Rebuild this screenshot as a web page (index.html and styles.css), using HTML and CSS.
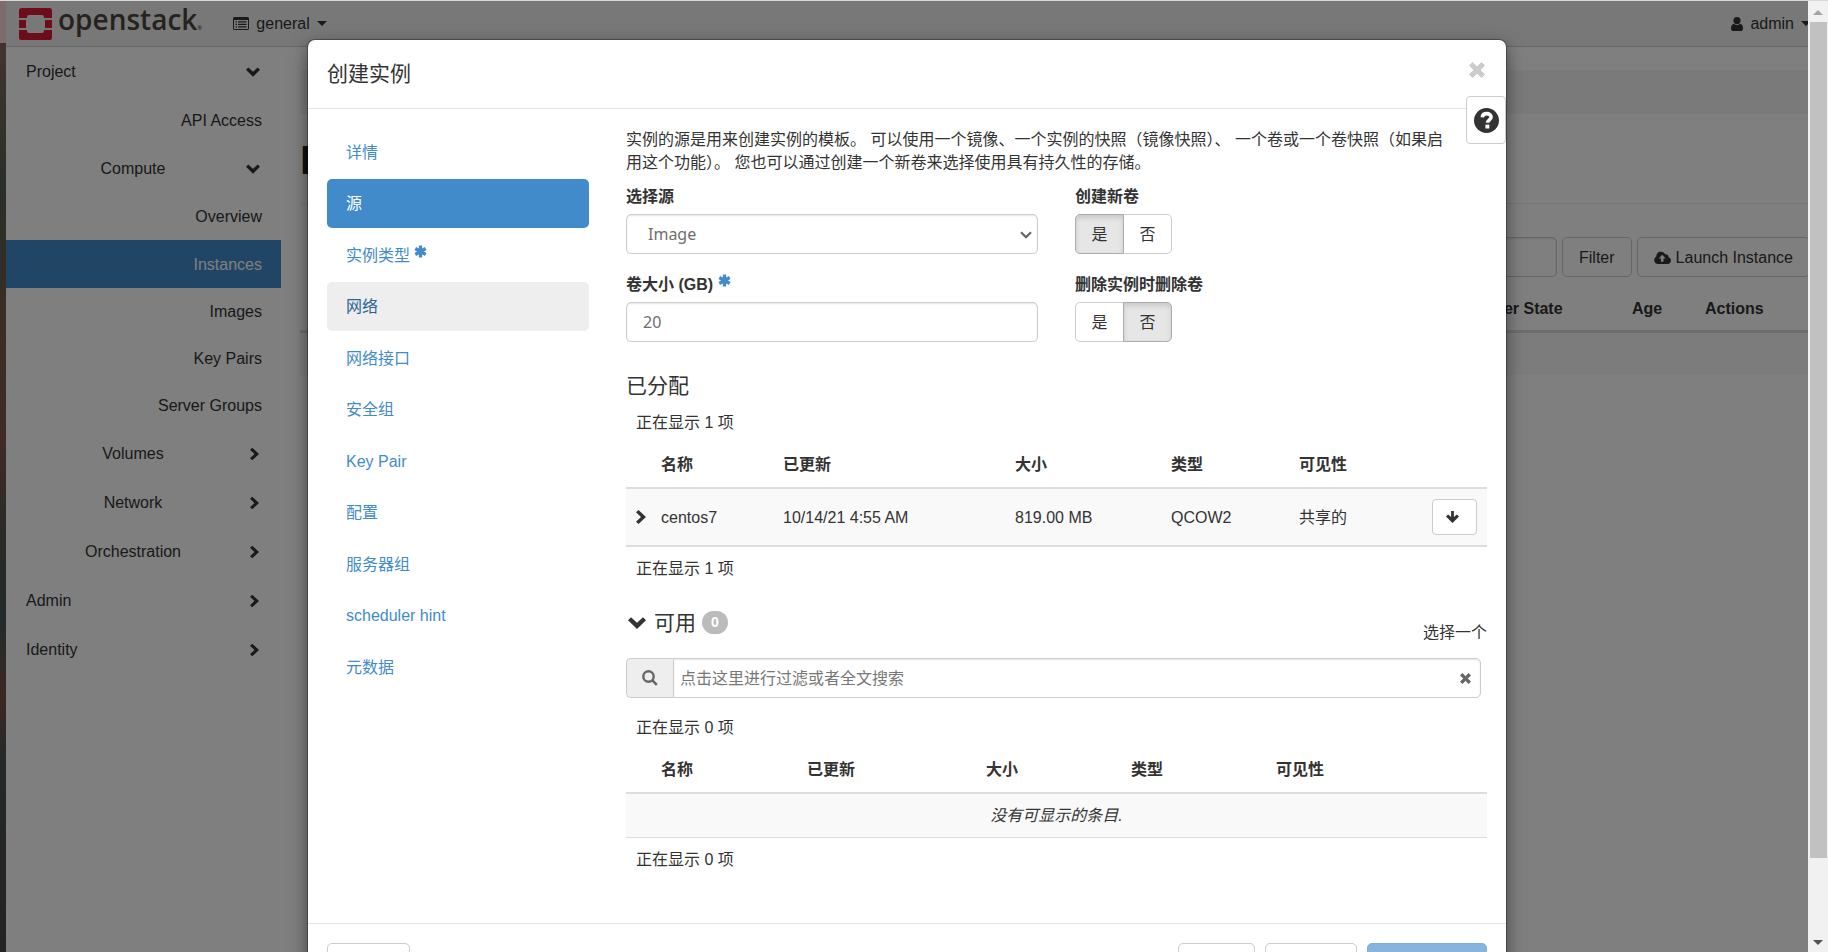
FILE: index.html
```html
<!DOCTYPE html>
<html lang="zh-CN">
<head>
    <meta charset="UTF-8">
    <meta name="viewport" content="width=device-width, initial-scale=1.0">
    <title>Instances - OpenStack Dashboard</title>
    <link rel="stylesheet" href="styles.css">
</head>
<body>
    <!-- shared icons -->
    <svg class="sprite" aria-hidden="true">
        <symbol id="chevron-down" viewBox="0 0 18 12"><path d="M0 3.2 3 .2l6 5.6 6-5.6 3 3L9 12z"/></symbol>
        <symbol id="chevron-right" viewBox="0 0 10 14"><path d="M2.500 0 10 7l-7.500 7L0 11.700 5 7 0 2.300z"/></symbol>
        <symbol id="times" viewBox="0 0 16 16"><path d="M3.500.5 8 5 12.500.5l3 3L11 8l4.500 4.500-3 3L8 11l-4.500 4.500-3-3L5 8 .5 3.500z" stroke="currentColor" stroke-linejoin="round"/></symbol>
        <symbol id="asterisk" viewBox="0 0 14 14"><path d="M7 .5v13M1.400 3.800l11.200 6.400M1.400 10.200l11.200-6.400" stroke="currentColor" stroke-width="3.600"/></symbol>
    </svg>

    <div class="desktop-edge"></div>

    <div class="page">
        <nav class="navbar">
            <a class="brand" href="#">
                <svg class="brand-mark" viewBox="0 0 33 32">
                    <path fill="#da1a32" d="M2.500 0h28A2.500 2.500 0 0 1 33 2.500V10h-8V9a2 2 0 0 0-2-2H10a2 2 0 0 0-2 2v1H0V2.500A2.500 2.500 0 0 1 2.500 0zM0 12h7v8H0zM26 12h7v8h-7zM0 22h8v1a2 2 0 0 0 2 2h13a2 2 0 0 0 2-2v-1h8v7.500a2.500 2.500 0 0 1-2.500 2.500h-28A2.500 2.500 0 0 1 0 29.500z"/>
                </svg>
                <span class="brand-name">openstack<span class="brand-dot">®</span></span>
            </a>
            <a class="nav-link" href="#">
                <svg class="icon-list" viewBox="0 0 16 13"><path fill-rule="evenodd" d="M1.500 0h13A1.500 1.500 0 0 1 16 1.500v10a1.500 1.500 0 0 1-1.500 1.500h-13A1.500 1.500 0 0 1 0 11.500v-10A1.500 1.500 0 0 1 1.500 0zM1 3v8.500l.5.5h13l.5-.5V3zM2.500 4.200H4v1.300H2.500zM5 4.200h8.500v1.300H5zM2.500 6.700H4V8H2.500zM5 6.700h8.500V8H5zM2.500 9.200H4v1.300H2.500zM5 9.200h8.500v1.300H5z"/></svg>
                general
                <span class="caret"></span>
            </a>
            <a class="nav-link nav-user" href="#">
                <svg class="icon-user" viewBox="0 0 12 14"><path d="M6 0a3.500 3.500 0 1 1 0 7.200A3.500 3.500 0 0 1 6 0zM3 6.800a4.500 4.500 0 0 0 6 0c2 .2 3 2 3 4.600 0 1.600-.9 2.600-2.200 2.600H2.200C.9 14 0 13 0 11.400 0 8.800 1 7 3 6.800z"/></svg>
                admin
                <span class="caret"></span>
            </a>
        </nav>

        <div class="main">
            <aside class="sidebar">
                <a class="side-head" href="#"><span>Project</span><svg class="down"><use href="#chevron-down"/></svg></a>
                <a class="side-item tall" href="#">API Access</a>
                <a class="side-head sub" href="#"><span>Compute</span><svg class="down"><use href="#chevron-down"/></svg></a>
                <a class="side-item" href="#">Overview</a>
                <a class="side-item tall active" href="#">Instances</a>
                <a class="side-item" href="#">Images</a>
                <a class="side-item" href="#">Key Pairs</a>
                <a class="side-item" href="#">Server Groups</a>
                <a class="side-head sub" href="#"><span>Volumes</span><svg class="right"><use href="#chevron-right"/></svg></a>
                <a class="side-head sub" href="#"><span>Network</span><svg class="right"><use href="#chevron-right"/></svg></a>
                <a class="side-head sub" href="#"><span>Orchestration</span><svg class="right"><use href="#chevron-right"/></svg></a>
                <a class="side-head" href="#"><span>Admin</span><svg class="right"><use href="#chevron-right"/></svg></a>
                <a class="side-head" href="#"><span>Identity</span><svg class="right"><use href="#chevron-right"/></svg></a>
            </aside>

            <main class="content">
                <div class="breadcrumb"></div>
                <h1>Instances</h1>
                <div class="toolbar">
                    <input class="form-control" type="text" aria-label="Filter instances">
                    <button class="btn" type="button">Filter</button>
                    <button class="btn btn-launch" type="button">
                        <svg class="icon-cloud" viewBox="0 0 17 13"><path fill-rule="evenodd" d="M4 13a4 4 0 0 1-1.700-7.500A4.800 4.800 0 0 1 11.300 3.200 2.800 2.800 0 0 1 14.500 6 3.600 3.600 0 0 1 13.500 13zM8.200 3.800 4.800 7.400H7v3.400h2.500V7.400h2.200z"/></svg>
                        Launch Instance
                    </button>
                </div>
                <table class="instances">
                    <thead>
                        <tr><th></th><th class="col-power">Power State</th><th class="col-age">Age</th><th class="col-actions">Actions</th></tr>
                    </thead>
                    <tbody>
                        <tr><td colspan="4"></td></tr>
                    </tbody>
                </table>
            </main>
        </div>
    </div>

    <div class="backdrop">
        <div class="modal" role="dialog" aria-labelledby="modal-title">
            <header class="modal-header">
                <h4 id="modal-title">创建实例</h4>
                <button class="close" type="button" aria-label="关闭"><svg><use href="#times"/></svg></button>
            </header>
            <button class="help" type="button" aria-label="帮助">
                <svg viewBox="0 0 25 25"><circle cx="12.500" cy="12.500" r="12.500" fill="#333"/><path d="M8.300 9.300C8.500 6.900 10.200 5.600 12.700 5.600c2.600 0 4.400 1.400 4.400 3.500 0 3-3.600 3-3.600 5.600" fill="none" stroke="#fff" stroke-width="3.600"/><path fill="#fff" d="M11.400 16.600h3.900v3.900h-3.900z"/></svg>
            </button>

            <div class="modal-body">
                <ul class="steps">
                    <li><a href="#">详情</a></li>
                    <li><a class="active" href="#">源</a></li>
                    <li><a href="#">实例类型 <svg class="required"><use href="#asterisk"/></svg></a></li>
                    <li><a class="hover" href="#">网络</a></li>
                    <li><a href="#">网络接口</a></li>
                    <li><a href="#">安全组</a></li>
                    <li><a href="#">Key Pair</a></li>
                    <li><a href="#">配置</a></li>
                    <li><a href="#">服务器组</a></li>
                    <li><a href="#">scheduler hint</a></li>
                    <li><a href="#">元数据</a></li>
                </ul>

                <section class="step">
                    <p class="intro">实例的源是用来创建实例的模板。 可以使用一个镜像、一个实例的快照（镜像快照）、 一个卷或一个卷快照（如果启用这个功能）。 您也可以通过创建一个新卷来选择使用具有持久性的存储。</p>

                    <div class="form-grid">
                        <div class="form-group">
                            <label for="boot-source">选择源</label>
                            <div class="select-wrap">
                                <select class="form-control" id="boot-source"><option>Image</option></select>
                                <svg viewBox="0 0 12 8"><path d="M1 1.300l5 5 5-5" fill="none" stroke="#666" stroke-width="2.200"/></svg>
                            </div>
                        </div>
                        <div class="form-group">
                            <span class="label" id="new-volume">创建新卷</span>
                            <div class="btn-group" role="group" aria-labelledby="new-volume">
                                <button class="btn pressed" type="button">是</button>
                                <button class="btn" type="button">否</button>
                            </div>
                        </div>
                        <div class="form-group">
                            <label for="volume-size">卷大小 (GB) <svg class="required"><use href="#asterisk"/></svg></label>
                            <input class="form-control" id="volume-size" type="text" value="20">
                        </div>
                        <div class="form-group">
                            <span class="label" id="delete-volume">删除实例时删除卷</span>
                            <div class="btn-group" role="group" aria-labelledby="delete-volume">
                                <button class="btn" type="button">是</button>
                                <button class="btn pressed" type="button">否</button>
                            </div>
                        </div>
                    </div>

                    <h4 class="allocated-title">已分配</h4>
                    <div class="count count-top">正在显示 1 项</div>
                    <table class="transfer allocated">
                        <colgroup><col class="c-expand"><col class="c-name"><col class="c-updated"><col class="c-size"><col class="c-type"><col><col class="c-action"></colgroup>
                        <thead>
                            <tr><th></th><th>名称</th><th>已更新</th><th>大小</th><th>类型</th><th>可见性</th><th></th></tr>
                        </thead>
                        <tbody>
                            <tr>
                                <td class="expand"><svg><use href="#chevron-right"/></svg></td>
                                <td>centos7</td>
                                <td>10/14/21 4:55 AM</td>
                                <td>819.00 MB</td>
                                <td>QCOW2</td>
                                <td>共享的</td>
                                <td>
                                    <button class="btn btn-move" type="button" aria-label="移除">
                                        <svg viewBox="0 0 14 13"><path d="M5.500 0h3v6.600L11.700 3.800 14 6 7 13 0 6l2.300-2.200 3.200 2.800z"/></svg>
                                    </button>
                                </td>
                            </tr>
                        </tbody>
                    </table>
                    <div class="count">正在显示 1 项</div>

                    <div class="available-head">
                        <h4><svg><use href="#chevron-down"/></svg>可用<span class="badge">0</span></h4>
                        <span>选择一个</span>
                    </div>
                    <div class="search">
                        <span class="addon"><svg viewBox="0 0 16 16"><circle cx="6.500" cy="6.500" r="5.200" fill="none" stroke="#666" stroke-width="2.400"/><path d="M10.400 10.400l4.400 4.400" stroke="#666" stroke-width="2.600"/></svg></span>
                        <input class="form-control" type="text" aria-label="过滤" placeholder="点击这里进行过滤或者全文搜索">
                        <button class="clear" type="button" aria-label="清除"><svg><use href="#times"/></svg></button>
                    </div>
                    <div class="count count-top">正在显示 0 项</div>
                    <table class="transfer available">
                        <colgroup><col class="c-expand"><col class="c-name"><col class="c-updated"><col class="c-size"><col class="c-type"><col></colgroup>
                        <thead>
                            <tr><th></th><th>名称</th><th>已更新</th><th>大小</th><th>类型</th><th>可见性</th></tr>
                        </thead>
                        <tbody>
                            <tr><td class="empty" colspan="6">没有可显示的条目.</td></tr>
                        </tbody>
                    </table>
                    <div class="count">正在显示 0 项</div>
                </section>
            </div>

            <footer class="modal-footer">
                <button class="btn btn-cancel" type="button" aria-label="取消"></button>
                <button class="btn btn-back" type="button" aria-label="返回"></button>
                <button class="btn btn-next" type="button" aria-label="下一项"></button>
                <button class="btn btn-primary" type="button" aria-label="创建实例" disabled></button>
            </footer>
        </div>
    </div>

    <div class="scrollbar">
        <span class="arrow-up"></span>
        <div class="track"><div class="thumb"></div></div>
        <span class="arrow-down"></span>
    </div>
</body>
</html>
```

FILE: styles.css
```css
* {
    box-sizing: border-box;
}
body {
    margin: 0;
    height: 100vh;
    overflow: hidden;
    display: flex;
    position: relative;
    border-top: 1px solid #d9d9d9;
    font-family: "Liberation Sans", Arial, "Noto Sans CJK SC", sans-serif;
    font-size: 16px;
    line-height: 23px;
    color: #333;
    background: #fff;
}
a {
    color: inherit;
    text-decoration: none;
}
h1, h4, p, ul {
    margin: 0;
    padding: 0;
    font-weight: normal;
}
h4 {
    font-size: 21px;
    line-height: 23px;
}
svg {
    fill: currentColor;
    flex: none;
}
button, input, select {
    font-family: inherit;
    font-size: 16px;
    line-height: 23px;
    color: #333;
    margin: 0;
}
table {
    width: 100%;
    border-collapse: collapse;
    table-layout: fixed;
}
th {
    text-align: left;
}
.sprite {
    position: absolute;
    width: 0;
    height: 0;
}
.desktop-edge {
    width: 6px;
    background: linear-gradient(#7d6c6c 42px, #40352e 42px, #2a2f27 20%, #382e24 33%, #402a25 46%, #2a2b26 56%, #222b2c 65%, #3b2820 73%, #25292a 80%, #232322);
}

/* controls */
.btn {
    height: 40px;
    padding: 0 16px;
    border: 1px solid #ccc;
    border-radius: 5px;
    background: #fff;
}
.form-control {
    width: 100%;
    height: 40px;
    padding: 0 16px;
    border: 1px solid #ccc;
    border-radius: 5px;
    background: #fff;
    box-shadow: inset 0 1px 2px rgba(0, 0, 0, 0.1);
    color: #6e6e6e;
    font-family: "Noto Sans", "Noto Sans CJK SC", sans-serif;
}
.caret {
    border: 5px solid transparent;
    border-top-color: currentColor;
    border-bottom: 0;
}

/* page behind the dialog */
.page {
    flex: 1;
    min-width: 0;
}
.navbar {
    display: flex;
    align-items: center;
    height: 46px;
    padding: 0 17px 0 13px;
    background: #f0f0f0;
    border-bottom: 1px solid #ccc;
}
.brand {
    display: flex;
    align-items: center;
    gap: 6px;
    height: 38px;
    margin-right: 31px;
    color: #4d453b;
}
.brand-mark {
    width: 33px;
    height: 32px;
}
.brand-name {
    font-family: "Open Sans", sans-serif;
    font-size: 28px;
    line-height: 36px;
    font-weight: 600;
}
.brand-dot {
    font-size: 6px;
}
.nav-link {
    display: flex;
    align-items: center;
    gap: 7px;
}
.nav-user {
    margin-left: auto;
}
.icon-list {
    width: 16px;
    height: 13px;
}
.icon-user {
    width: 12px;
    height: 14px;
}
.main {
    display: flex;
}
.sidebar {
    width: 275px;
    flex: none;
}
.side-head, .side-item {
    display: flex;
    align-items: center;
    height: 47px;
    padding: 0 19px 0 20px;
}
.side-head {
    height: 49px;
}
.side-head span {
    flex: 1;
}
.side-head.sub span {
    text-align: center;
}
.side-item {
    justify-content: flex-end;
}
.side-item.tall {
    height: 48px;
}
.side-item.active {
    background: #428bca;
    color: #fff;
}
.side-head svg {
    margin: 0 2px 0 6px;
    width: 14px;
    height: 10px;
}
.side-head .right {
    margin-left: 10px;
    margin-right: 3px;
    width: 9px;
    height: 14px;
}
.content {
    flex: 1;
    min-width: 0;
    padding: 23px 18px 0 19px;
}
.breadcrumb {
    height: 44px;
    border-radius: 4px;
    background: #f5f5f5;
}
.content h1 {
    padding: 23px 0 20px;
    border-bottom: 1px solid #eee;
    font-size: 41px;
    line-height: 46px;
    font-weight: bold;
    color: #222;
}
.toolbar {
    display: flex;
    justify-content: flex-end;
    gap: 5px;
    margin: 33px 0 20px;
}
.toolbar .form-control {
    width: 300px;
}
.btn-launch {
    display: flex;
    align-items: center;
    gap: 5px;
}
.icon-cloud {
    width: 17px;
    height: 13px;
}
.instances th {
    padding: 0 10px 10px;
    border-bottom: 3px solid #ddd;
}
.instances td {
    height: 43px;
    background: #f9f9f9;
}
.col-power {
    width: 161px;
}
.col-age {
    width: 73px;
}
.col-actions {
    width: 115px;
}

/* dialog */
.backdrop {
    position: absolute;
    top: 0;
    right: 20px;
    bottom: 0;
    left: 6px;
    overflow: hidden;
    padding-top: 39px;
    background: rgba(0, 0, 0, 0.5);
}
.modal {
    position: relative;
    max-width: 1198px;
    margin: 0 auto;
    background: #fff;
    border-radius: 7px;
    box-shadow: 0 0 0 1px rgba(0, 0, 0, 0.3), 0 6px 18px rgba(0, 0, 0, 0.5);
}
.modal-header {
    display: flex;
    justify-content: space-between;
    align-items: flex-start;
    padding: 22px 21px 23px 19px;
    border-bottom: 1px solid #e5e5e5;
}
.close, .clear {
    padding: 0;
    border: 0;
    background: none;
    color: #ccc;
}
.close svg {
    display: block;
    width: 16px;
    height: 16px;
}
.help {
    position: absolute;
    top: 56px;
    right: 0;
    width: 40px;
    height: 48px;
    padding: 0;
    border: 1px solid #ccc;
    border-radius: 4px;
    background: #fff;
}
.help svg {
    display: block;
    width: 25px;
    margin: 0 auto;
}
.modal-body {
    display: grid;
    grid-template-columns: 262px 1fr;
    gap: 37px;
    padding: 19px 19px 42px;
}
.steps {
    list-style: none;
}
.steps li {
    margin-bottom: 2px;
}
.steps li:nth-child(even) {
    margin-bottom: 3px;
}
.steps a {
    display: block;
    height: 49px;
    padding: 13px 19px;
    border-radius: 5px;
    color: #428bca;
}
.steps a.active {
    background: #428bca;
    color: #fff;
}
.steps a.hover {
    background: #eee;
    color: #2a6496;
}
.required {
    width: 13px;
    height: 13px;
    color: #428bca;
    vertical-align: 3px;
}
.intro {
    margin-bottom: 11px;
    padding-right: 30px;
}
.form-grid {
    display: grid;
    grid-template-columns: 1fr 1fr;
    gap: 19px 37px;
}
.form-group label, .form-group .label {
    display: block;
    height: 23px;
    margin-bottom: 6px;
    font-weight: bold;
}
.select-wrap {
    position: relative;
}
.select-wrap select {
    appearance: none;
    padding-left: 21px;
}
.select-wrap svg {
    position: absolute;
    top: 17px;
    right: 6px;
    width: 12px;
    height: 8px;
}
.btn-group {
    display: flex;
}
.btn-group .btn {
    width: 49px;
    padding: 0;
}
.btn-group .btn:first-child {
    border-radius: 5px 0 0 5px;
}
.btn-group .btn:last-child {
    margin-left: -1px;
    border-radius: 0 5px 5px 0;
}
.btn-group .btn.pressed {
    position: relative;
    border-color: #adadad;
    background: #e6e6e6;
    box-shadow: inset 0 3px 5px rgba(0, 0, 0, 0.125);
}
.allocated-title {
    margin-top: 32px;
}
.count {
    padding: 10px;
}
.count-top {
    padding: 14px 10px 8px;
}
.transfer th {
    padding: 11px 10px;
    border-bottom: 2px solid #ddd;
}
.transfer td {
    padding: 10px;
    background: #f9f9f9;
    border-bottom: 1px solid #ddd;
}
.allocated td {
    border-bottom-width: 2px;
}
.transfer .expand {
    padding-right: 0;
}
.expand svg {
    display: block;
    width: 10px;
    height: 14px;
}
.transfer .empty {
    text-align: center;
    font-style: italic;
}
.c-expand {
    width: 25px;
}
.allocated .c-name {
    width: 122px;
}
.allocated .c-updated {
    width: 232px;
}
.allocated .c-size {
    width: 156px;
}
.allocated .c-type {
    width: 128px;
}
.c-action {
    width: 65px;
}
.available .c-name {
    width: 146px;
}
.available .c-updated {
    width: 179px;
}
.available .c-size, .available .c-type {
    width: 145px;
}
.btn-move {
    display: block;
    width: 45px;
    height: 36px;
    padding: 0 15px 0 13px;
    border-radius: 4px;
}
.btn-move svg {
    display: block;
    width: 13px;
}
.available-head {
    display: flex;
    justify-content: space-between;
    margin: 21px 0 14px;
}
.available-head > span {
    padding-top: 10px;
}
.available-head h4 {
    display: flex;
    align-items: center;
    height: 23px;
}
.available-head h4 svg {
    width: 18px;
    height: 12px;
    margin: 0 8px 0 2px;
}
.badge {
    width: 26px;
    margin-left: 6px;
    border-radius: 12px;
    background: #bbb;
    color: #fff;
    font-size: 14px;
    font-weight: bold;
    text-align: center;
}
.search {
    position: relative;
    display: flex;
    margin: 0 6px 4px 0;
}
.addon {
    display: flex;
    align-items: center;
    justify-content: center;
    width: 47px;
    border: 1px solid #ccc;
    border-right: 0;
    border-radius: 5px 0 0 5px;
    background: #eee;
}
.addon svg {
    width: 16px;
}
.search .form-control {
    flex: 1;
    padding-left: 6px;
    border-radius: 0 5px 5px 0;
}
.search .form-control::placeholder {
    color: #777;
}
.clear {
    position: absolute;
    top: 15px;
    right: 10px;
    color: #666;
}
.clear svg {
    display: block;
    width: 11px;
    height: 11px;
}
.modal-footer {
    display: flex;
    gap: 10px;
    padding: 19px;
    border-top: 1px solid #e5e5e5;
}
.btn-cancel {
    width: 83px;
    margin-right: auto;
}
.btn-back {
    width: 77px;
}
.btn-next {
    width: 92px;
}
.btn-primary {
    width: 120px;
    border-color: #7eaed9;
    background: #86b4dd;
    color: #fff;
}

/* window scrollbar */
.scrollbar {
    position: absolute;
    top: 0;
    right: 0;
    bottom: 0;
    width: 20px;
    display: flex;
    flex-direction: column;
    align-items: center;
    background: #f1f1f1;
}
.arrow-up {
    margin: 9px 0 7px;
    border: 5px solid transparent;
    border-top: 0;
    border-bottom-color: #a3a3a3;
}
.arrow-down {
    margin: 9px 0 7px;
    border: 5px solid transparent;
    border-bottom: 0;
    border-top-color: #505050;
}
.track {
    flex: 1;
    width: 17px;
}
.thumb {
    height: 92%;
    background: #c1c1c1;
}
```
